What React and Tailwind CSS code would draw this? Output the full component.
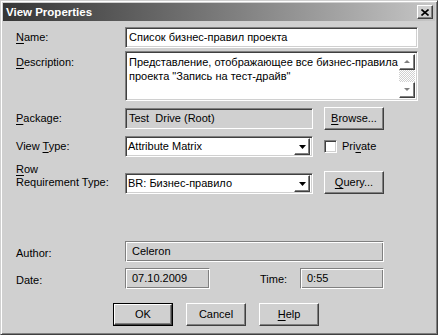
const sunken =
  "border border-t-[#808080] border-l-[#808080] border-r-white border-b-white shadow-[inset_1px_1px_0_#404040,inset_-1px_-1px_0_#d0d0d0]";
const raised =
  "border border-t-white border-l-white border-r-[#404040] border-b-[#404040] shadow-[inset_-1px_-1px_0_#808080]";
const etched =
  "border border-t-[#808080] border-l-[#808080] border-r-white border-b-white shadow-[inset_1px_1px_0_#fff,inset_-1px_-1px_0_#808080]";

const Acc = ({ children }) => <span className="underline underline-offset-[2px]">{children}</span>;

const Button = ({ children, isDefault }) => (
  <div className={`w-[60px] ${isDefault ? "border border-black h-[23px]" : "h-[23px]"}`}>
    <div className={`${raised} h-full flex items-center justify-center`}>{children}</div>
  </div>
);

const SmallButton = ({ children, className = "" }) => (
  <div className={`${raised} flex items-center justify-center ${className}`}>{children}</div>
);

const DownArrow = ({ color = "#000" }) => (
  <svg width="7" height="4" viewBox="0 0 7 4">
    <path d="M0 0h7L3.5 4z" fill={color} />
  </svg>
);

const Dropdown = ({ value }) => (
  <div className={`${sunken} w-[188px] h-[21px] bg-white flex items-center pl-[2px] pr-[2px]`}>
    <span className="flex-1">{value}</span>
    <SmallButton className="w-[16px] h-[17px]">
      <DownArrow />
    </SmallButton>
  </div>
);

const App = () => {
  return (
    <div className="w-[438px] h-[335px] bg-[#d0d0d0] text-black text-[11px] leading-[13px] font-['Liberation_Sans',Arial,sans-serif] border border-t-[#d0d0d0] border-l-[#d0d0d0] border-r-[#404040] border-b-[#404040] shadow-[inset_1px_1px_0_#fff,inset_-1px_-1px_0_#808080] p-[2px] flex flex-col">
      {/* Title bar */}
      <div className="h-[18px] bg-linear-to-r from-[#363636] to-[#c6c6c6] flex items-center justify-between pl-[3px] pr-[2px]">
        <span className="text-white font-bold text-[11.5px]">View Properties</span>
        <SmallButton className="w-[16px] h-[14px] bg-[#d0d0d0]">
          <svg width="8" height="7" viewBox="0 0 8 7">
            <path d="M0.5 0.5l7 6M7.5 0.5l-7 6" stroke="#000" strokeWidth="1.6" />
          </svg>
        </SmallButton>
      </div>

      <div className="flex flex-col pl-[13px] pt-[6px]">
        {/* Name */}
        <div className="flex items-center">
          <div className="w-[109px]">
            <Acc>N</Acc>ame:
          </div>
          <div className={`${sunken} w-[293px] h-[21px] bg-white flex items-center pl-[3px]`}>
            Список бизнес-правил проекта
          </div>
        </div>

        {/* Description */}
        <div className="flex mt-[3px]">
          <div className="w-[109px] pt-[5px]">
            <Acc>D</Acc>escription:
          </div>
          <div className={`${sunken} w-[293px] h-[50px] bg-white flex p-[2px]`}>
            <div className="flex-1 pl-[1px] pt-[1px] leading-[14px]">
              Представление, отображающее все бизнес-правила
              <br />
              проекта "Запись на тест-драйв"
            </div>
            <div className="w-[16px] flex flex-col">
              <SmallButton className="h-[16px]">
                <svg width="7" height="5" viewBox="0 0 7 5">
                  <path d="M1 4h6L4 1z" fill="#fff" />
                  <path d="M0 3h6L3 0z" fill="#808080" />
                </svg>
              </SmallButton>
              <div className="flex-1 bg-[repeating-conic-gradient(#fff_0%_25%,#d0d0d0_0%_50%)] bg-[length:2px_2px]" />
              <SmallButton className="h-[16px]">
                <svg width="7" height="5" viewBox="0 0 7 5">
                  <path d="M1 1h6L4 4z" fill="#fff" />
                  <path d="M0 0h6L3 3z" fill="#808080" />
                </svg>
              </SmallButton>
            </div>
          </div>
        </div>

        {/* Package */}
        <div className="flex items-center mt-[6px]">
          <div className="w-[109px]">
            <Acc>P</Acc>ackage:
          </div>
          <div className={`${sunken} w-[188px] h-[21px] flex items-center pl-[3px]`}>Test&nbsp; Drive (Root)</div>
          <div className="ml-[11px]">
            <Button>
              <span>
                <Acc>B</Acc>rowse...
              </span>
            </Button>
          </div>
        </div>

        {/* View Type */}
        <div className="flex items-center mt-[6px]">
          <div className="w-[109px]">
            View <Acc>T</Acc>ype:
          </div>
          <Dropdown value="Attribute Matrix" />
          <div className={`${sunken} ml-[11px] w-[13px] h-[13px] bg-white`} />
          <span className="ml-[5px]">
            Pri<Acc>v</Acc>ate
          </span>
        </div>

        {/* Row Requirement Type */}
        <div className="flex items-end mt-[6px]">
          <div className="w-[109px] pb-[5px]">
            <div>
              <Acc>R</Acc>ow
            </div>
            <div>Requirement Type:</div>
          </div>
          <Dropdown value="BR: Бизнес-правило" />
          <div className="ml-[11px]">
            <Button>
              <span>
                <Acc>Q</Acc>uery...
              </span>
            </Button>
          </div>
        </div>

        {/* Author */}
        <div className="flex items-center mt-[47px]">
          <div className="w-[109px] pt-[3px]">Author:</div>
          <div className={`${etched} w-[259px] h-[21px] flex items-center pl-[6px]`}>Celeron</div>
        </div>

        {/* Date / Time */}
        <div className="flex items-center mt-[6px]">
          <div className="w-[109px] pt-[3px]">Date:</div>
          <div className={`${etched} w-[85px] h-[21px] flex items-center pl-[6px]`}>07.10.2009</div>
          <div className="ml-[50px] w-[40px] pt-[1px]">Time:</div>
          <div className={`${etched} w-[84px] h-[21px] flex items-center pl-[6px]`}>0:55</div>
        </div>

        {/* Buttons */}
        <div className="flex mt-[14px] pl-[97px] gap-[13px]">
          <Button isDefault>OK</Button>
          <Button>Cancel</Button>
          <Button>
            <span>
              <Acc>H</Acc>elp
            </span>
          </Button>
        </div>
      </div>
    </div>
  );
};

export default App;
